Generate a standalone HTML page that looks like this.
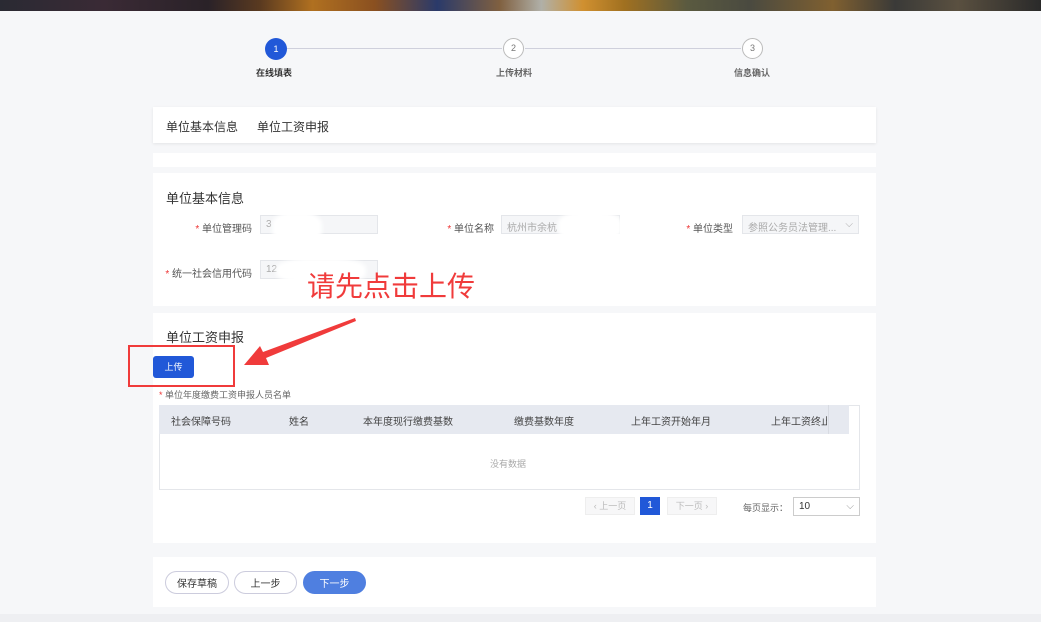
<!DOCTYPE html><html><head><meta charset="utf-8"><style>
*{margin:0;padding:0;box-sizing:border-box}
body{width:1041px;height:622px;background:#f6f7f9;font-family:"Liberation Sans","Noto Sans CJK SC",sans-serif;position:relative;overflow:hidden;color:#333}
.a{position:absolute}
.card{position:absolute;left:153px;width:723px;background:#fff}
.lbl{position:absolute;font-size:10px;color:#555;text-align:right;white-space:nowrap}
.lbl b{color:#e33;font-weight:normal}
.inp{position:absolute;height:19px;border:1px solid #e4e6ea;background:#f5f6f8;font-size:10px;color:#aaa;padding:3px 5px}
.blur{position:absolute;background:#fff;border-radius:40%;filter:blur(2px)}
.th{position:absolute;top:413px;font-size:10px;color:#444}
.btn{position:absolute;top:571px;height:23px;border-radius:12px;border:1px solid #ccd;font-size:10px;display:flex;align-items:center;justify-content:center;background:#fff;color:#333}
</style></head><body>
<div class="a" style="left:0;top:0;width:1041px;height:11px;background:linear-gradient(90deg,#2a2a33 0%,#3a2a35 10%,#2a2228 20%,#5a3a20 25%,#b07020 30%,#8a5020 36%,#2a3a6a 42%,#806040 48%,#b0b0a8 52%,#d09030 56%,#a07020 60%,#5a5a40 66%,#4a4a40 72%,#806030 80%,#3a3a38 86%,#5a5040 92%,#2a2a2a 100%)"></div>
<div class="a" style="left:287px;top:48px;width:215px;height:1px;background:#cfd0dc"></div>
<div class="a" style="left:525px;top:48px;width:216px;height:1px;background:#cfd0dc"></div>
<div class="a" style="left:265px;top:38px;width:22px;height:22px;border-radius:50%;background:#2158d8;color:#fff;font-size:9px;text-align:center;line-height:22px">1</div>
<div class="a" style="left:503px;top:38px;width:21px;height:21px;border-radius:50%;border:1px solid #bbb;background:#fff;color:#777;font-size:9px;text-align:center;line-height:19px">2</div>
<div class="a" style="left:742px;top:38px;width:21px;height:21px;border-radius:50%;border:1px solid #bbb;background:#fff;color:#777;font-size:9px;text-align:center;line-height:19px">3</div>
<div class="a" style="left:256px;top:66px;font-size:9px;font-weight:bold;color:#333">在线填表</div>
<div class="a" style="left:496px;top:66px;font-size:9px;font-weight:bold;color:#666">上传材料</div>
<div class="a" style="left:734px;top:66px;font-size:9px;font-weight:bold;color:#666">信息确认</div>
<div class="card" style="top:107px;height:36px;box-shadow:0 1px 3px rgba(0,0,0,.08)">
<span class="a" style="left:13px;top:11px;font-size:12px;color:#333">单位基本信息</span>
<span class="a" style="left:104px;top:11px;font-size:12px;color:#333">单位工资申报</span></div>
<div class="card" style="top:153px;height:14px"></div>
<div class="card" style="top:173px;height:133px"></div>
<div class="a" style="left:166px;top:188px;font-size:13px;color:#333">单位基本信息</div>
<div class="lbl" style="right:789px;top:220px"><b>* </b>单位管理码</div>
<div class="inp" style="left:260px;top:215px;width:118px">3</div>
<div class="lbl" style="right:547px;top:220px"><b>* </b>单位名称</div>
<div class="inp" style="left:501px;top:215px;width:119px">杭州市余杭</div>
<div class="lbl" style="right:308px;top:220px"><b>* </b>单位类型</div>
<div class="inp" style="left:742px;top:215px;width:117px">参照公务员法管理...<span style="position:absolute;right:5px;color:#aaa">⌵</span></div>
<div class="lbl" style="right:789px;top:265px"><b>* </b>统一社会信用代码</div>
<div class="inp" style="left:260px;top:260px;width:118px">12</div>
<div class="blur" style="left:272px;top:212px;width:50px;height:32px"></div>
<div class="blur" style="left:558px;top:211px;width:64px;height:32px"></div>
<div class="blur" style="left:276px;top:258px;width:90px;height:26px"></div>
<div class="a" style="left:307px;top:270px;font-size:28px;color:#f03b3b;line-height:34px">请先点击上传</div>
<div class="card" style="top:313px;height:230px"></div>
<div class="a" style="left:166px;top:327px;font-size:13px;color:#333">单位工资申报</div>
<div class="a" style="left:153px;top:356px;width:41px;height:22px;background:#2158d8;border-radius:3px;color:#fff;font-size:9px;text-align:center;line-height:22px">上传</div>
<div class="a" style="left:128px;top:345px;width:107px;height:42px;border:2px solid #f03b3b"></div>
<svg class="a" style="left:240px;top:315px" width="120" height="60"><polygon points="115,3 116,6 26,43 29,50 4,50 20,31 23,37" fill="#f03b3b"/></svg>
<div class="a" style="left:159px;top:388px;font-size:9px;color:#666"><span style="color:#e33">* </span>单位年度缴费工资申报人员名单</div>
<div class="a" style="left:159px;top:405px;width:701px;height:85px;border:1px solid #e4e6ea"></div>
<div class="a" style="left:159px;top:405px;width:690px;height:29px;background:#e6e9f0"></div>
<div class="a" style="left:828px;top:405px;width:1px;height:29px;background:#d8dbe2"></div>
<div class="th" style="left:171px">社会保障号码</div>
<div class="th" style="left:289px">姓名</div>
<div class="th" style="left:363px">本年度现行缴费基数</div>
<div class="th" style="left:514px">缴费基数年度</div>
<div class="th" style="left:631px">上年工资开始年月</div>
<div class="th" style="left:771px;width:56px;overflow:hidden;white-space:nowrap">上年工资终止</div>
<div class="a" style="left:490px;top:457px;font-size:9px;color:#aaa">没有数据</div>
<div class="a" style="left:585px;top:497px;width:50px;height:18px;border:1px solid #eee;background:#f7f7f8;font-size:9px;color:#bbb;text-align:center;line-height:16px">‹ 上一页</div>
<div class="a" style="left:640px;top:497px;width:20px;height:18px;background:#2158d8;color:#fff;font-size:10px;text-align:center;line-height:18px">1</div>
<div class="a" style="left:667px;top:497px;width:50px;height:18px;border:1px solid #eee;background:#f7f7f8;font-size:9px;color:#bbb;text-align:center;line-height:16px">下一页 ›</div>
<div class="a" style="left:743px;top:501px;font-size:9px;color:#666">每页显示：</div>
<div class="a" style="left:793px;top:497px;width:67px;height:19px;border:1px solid #ccc;font-size:10px;padding:3px 5px;color:#333">10<span style="position:absolute;right:5px;color:#999">⌵</span></div>
<div class="card" style="top:557px;height:50px"></div>
<div class="btn" style="left:165px;width:64px">保存草稿</div>
<div class="btn" style="left:234px;width:63px">上一步</div>
<div class="btn" style="left:303px;width:63px;background:#4f7fe0;border-color:#4f7fe0;color:#fff">下一步</div>
<div class="a" style="left:0;top:614px;width:1041px;height:8px;background:#eeeff2"></div>
</body></html>
